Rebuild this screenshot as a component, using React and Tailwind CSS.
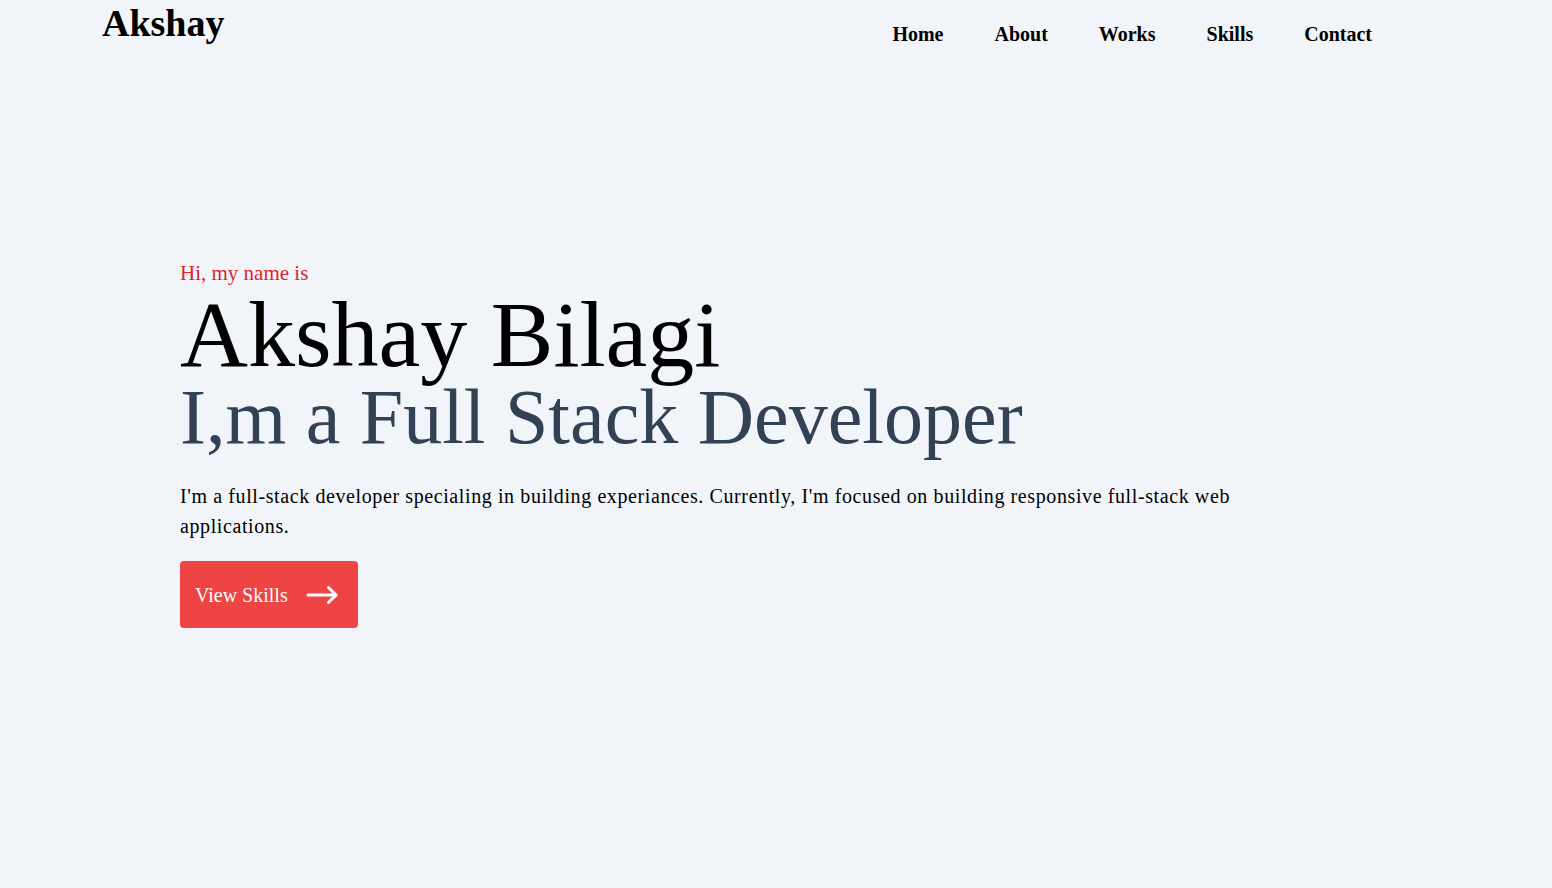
import React from "react";

const serif = "font-['Liberation_Serif',_'Times_New_Roman',_serif]";

function ArrowIcon() {
  return (
    <svg width="33" height="20" viewBox="0 0 33 20" fill="none" stroke="currentColor" strokeWidth="3" strokeLinecap="round" strokeLinejoin="round">
      <path d="M2 10h28" />
      <path d="M22.5 2.5l7.5 7.5-7.5 7.5" />
    </svg>
  );
}

export default function App() {
  const links = ["Home", "About", "Works", "Skills", "Contact"];

  return (
    <div className={`min-h-screen bg-[#f1f5f9] text-black ${serif}`}>
      {/* HEADER */}
      <header className="flex items-start justify-between pl-[102px] pr-[180px]">
        <a href="#" className="pt-[3px] text-[38px] font-bold leading-[40px]">
          Akshay
        </a>
        <nav className="pt-5">
          <ul className="flex gap-[51px] text-xl font-bold leading-7">
            {links.map((link) => (
              <li key={link}>
                <a href="#">{link}</a>
              </li>
            ))}
          </ul>
        </nav>
      </header>

      {/* HERO */}
      <section className="pl-[180px] pt-[211px]">
        <p className="text-[21px] leading-7 text-[#dc2626]">Hi, my name is</p>
        <h1 className="text-[94px] leading-[94px]">Akshay Bilagi</h1>
        <h2 className="text-[78px] leading-[72px] text-[#334155]">
          I,m a Full Stack Developer
        </h2>
        <p className="mt-7 w-[1090px] text-[20px] leading-[30px] tracking-[0.6px]">
          I'm a full-stack developer specialing in building experiances.
          Currently, I'm focused on building responsive full-stack web
          applications.
        </p>
        <button className="mt-5 flex h-[67px] w-[178px] items-center gap-[18px] rounded bg-[#ef4444] px-[15px] text-xl text-white">
          View Skills
          <ArrowIcon />
        </button>
      </section>
    </div>
  );
}
